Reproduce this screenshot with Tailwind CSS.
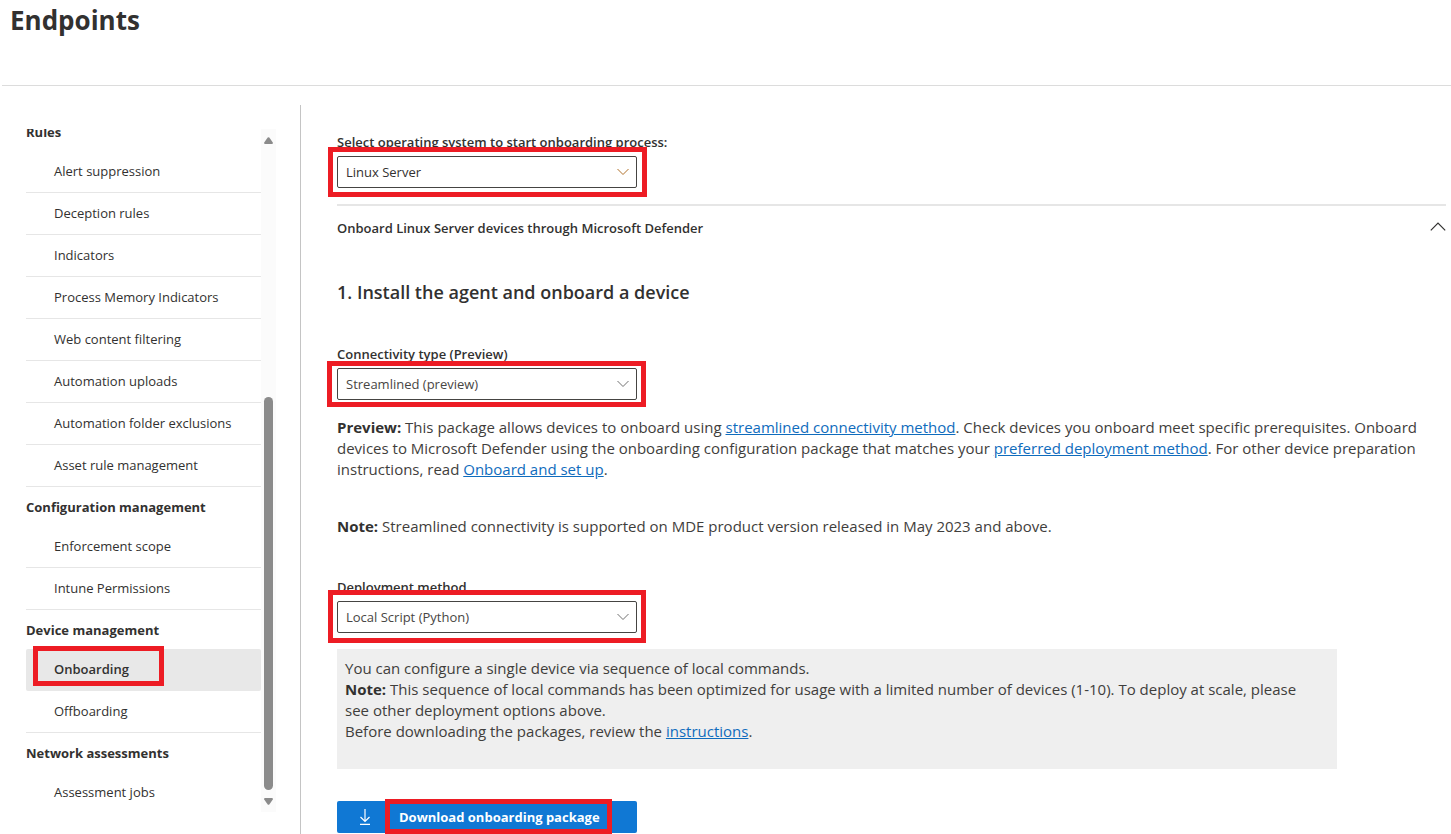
<!DOCTYPE html>
<html lang="en">
<head>
<meta charset="utf-8">
<meta name="viewport" content="width=device-width, initial-scale=1">
<title>Endpoints</title>
<script src="https://cdn.jsdelivr.net/npm/@tailwindcss/browser@4"></script>
</head>
<body class="flex h-screen flex-col overflow-hidden bg-white font-['Open_Sans','Noto_Sans',sans-serif] text-[13px] text-[#323130]">
  <header class="ml-0.5 h-[86px] shrink-0 border-b border-[#dcdcdc] pl-2">
    <h1 class="text-[26px] leading-10 font-bold">Endpoints</h1>
  </header>

  <div class="flex min-h-0 flex-1">
    <aside class="flex w-[300px] shrink-0 pt-[43px] pb-[22px] pl-[26px]">
      <nav aria-label="Endpoint settings" class="min-w-0 flex-1 overflow-hidden">
        <div class="-mt-[17px]">
          <h2 class="h-[39px] text-[13px] leading-10 font-bold">Rules</h2>
          <ul>
            <li><a href="#" class="block h-[42px] border-b border-[#e6e6e6] pl-7 leading-10">Alert suppression</a></li>
            <li><a href="#" class="block h-[42px] border-b border-[#e6e6e6] pl-7 leading-10">Deception rules</a></li>
            <li><a href="#" class="block h-[42px] border-b border-[#e6e6e6] pl-7 leading-10">Indicators</a></li>
            <li><a href="#" class="block h-[42px] border-b border-[#e6e6e6] pl-7 leading-10">Process Memory Indicators</a></li>
            <li><a href="#" class="block h-[42px] border-b border-[#e6e6e6] pl-7 leading-10">Web content filtering</a></li>
            <li><a href="#" class="block h-[42px] border-b border-[#e6e6e6] pl-7 leading-10">Automation uploads</a></li>
            <li><a href="#" class="block h-[42px] border-b border-[#e6e6e6] pl-7 leading-10">Automation folder exclusions</a></li>
            <li><a href="#" class="block h-[42px] border-b border-[#e6e6e6] pl-7 leading-10">Asset rule management</a></li>
          </ul>
          <h2 class="h-[39px] text-[13px] leading-10 font-bold">Configuration management</h2>
          <ul>
            <li><a href="#" class="block h-[42px] border-b border-[#e6e6e6] pl-7 leading-10">Enforcement scope</a></li>
            <li><a href="#" class="block h-[42px] border-b border-[#e6e6e6] pl-7 leading-10">Intune Permissions</a></li>
          </ul>
          <h2 class="h-[39px] text-[13px] leading-10 font-bold">Device management</h2>
          <ul>
            <li class="relative">
              <a href="#" aria-current="page" class="block h-[42px] rounded-xs bg-[#e8e8e8] pl-7 leading-10 font-semibold">Onboarding</a>
              <span class="pointer-events-none absolute -top-[3px] left-[7px] h-10 w-[131px] border-5 border-[#ed1c24]"></span>
            </li>
            <li><a href="#" class="block h-[42px] border-b border-[#e6e6e6] pl-7 leading-10">Offboarding</a></li>
          </ul>
          <h2 class="h-[39px] text-[13px] leading-10 font-bold">Network assessments</h2>
          <ul>
            <li><a href="#" class="block h-[42px] pl-7 leading-10">Assessment jobs</a></li>
          </ul>
        </div>
      </nav>
      <div class="mr-6 flex w-[15px] flex-col items-center bg-[#fbfbfb] pt-2 pb-[7px]" aria-hidden="true">
        <svg class="h-[7px] w-[9px]" viewBox="0 0 9 7" fill="#8b8b8b"><path d="M3.7.6Q4.5-.3 5.3.6L8.8 5.4Q9.200 6.900 8 7H1Q-.2 6.900.2 5.400Z"/></svg>
        <div class="mt-auto mb-2 h-[393px] w-[9px] rounded-full bg-[#8b8b8b]"></div>
        <svg class="h-[7px] w-[9px]" viewBox="0 0 9 7" fill="#8b8b8b"><path d="M3.700 6.400Q4.500 7.300 5.300 6.400L8.800 1.600Q9.200.1 8 0H1Q-.2.1.2 1.600Z"/></svg>
      </div>
    </aside>

    <main class="mt-[19px] min-w-0 flex-1 border-l border-[#c4c4c4] pt-[27px] pr-[5px] pl-9">
      <label for="os" class="block h-6 leading-5 font-semibold">Select operating system to start onboarding process:</label>
      <div class="relative w-[300px]">
        <select id="os" class="block h-8 w-full appearance-none rounded-xs border border-[#454442] bg-white px-2 pt-0.5"><option>Linux Server</option></select>
        <svg class="pointer-events-none absolute top-3 right-2 h-2 w-3" viewBox="0 0 12 8" fill="none" stroke="#b0702a"><path d="M.5 1 6 6.500 11.500 1"/></svg>
        <span class="pointer-events-none absolute -top-[9px] -left-[9px] h-[50px] w-[319px] border-5 border-[#ed1c24]"></span>
      </div>

      <div class="mt-4 flex h-[47px] items-center justify-between border-t-2 border-[#e6e6e6]">
        <h2 class="font-semibold">Onboard Linux Server devices through Microsoft Defender</h2>
        <button type="button" aria-label="Collapse section" class="block pb-1">
          <svg class="block h-[9px] w-4" viewBox="0 0 16 9" fill="none" stroke="#323130" stroke-width="1.200"><path d="M.8 8.300 8 1l7.200 7.300"/></svg>
        </button>
      </div>

      <h3 class="mt-[27px] text-lg leading-7 font-semibold">1. Install the agent and onboard a device</h3>

      <label for="connectivity" class="mt-[38px] block h-6 leading-5 font-semibold">Connectivity type (Preview)</label>
      <div class="relative w-[300px]">
        <select id="connectivity" class="block h-8 w-full appearance-none rounded-xs border border-[#454442] bg-white px-2 pt-0.5 text-[#484644]"><option>Streamlined (preview)</option></select>
        <svg class="pointer-events-none absolute top-3 right-2 h-2 w-3" viewBox="0 0 12 8" fill="none" stroke="#707070"><path d="M.5 1 6 6.500 11.500 1"/></svg>
        <span class="pointer-events-none absolute -top-[7px] -left-[10px] h-[46px] w-[319px] border-5 border-[#ed1c24]"></span>
      </div>

      <p class="mt-[17px] text-[15px] leading-[21px] text-[#3f3e3c]"><b class="text-[#323130]">Preview:</b> This package allows devices to onboard using <a href="#" class="text-[#0f6cbd] underline">streamlined connectivity method</a>. Check devices you onboard meet specific prerequisites. Onboard devices to Microsoft Defender using the onboarding configuration package that matches your <a href="#" class="text-[#0f6cbd] underline">preferred deployment method</a>. For other device preparation instructions, read <a href="#" class="text-[#0f6cbd] underline">Onboard and set up</a>.</p>
      <p class="mt-9 text-[15px] leading-[21px] text-[#3f3e3c]"><b class="text-[#323130]">Note:</b> Streamlined connectivity is supported on MDE product version released in May 2023 and above.</p>

      <label for="method" class="mt-10 block h-6 leading-5 font-semibold">Deployment method</label>
      <div class="relative w-[300px]">
        <select id="method" class="block h-8 w-full appearance-none rounded-xs border border-[#454442] bg-white px-2 pt-0.5 text-[#484644]"><option>Local Script (Python)</option></select>
        <svg class="pointer-events-none absolute top-3 right-2 h-2 w-3" viewBox="0 0 12 8" fill="none" stroke="#707070"><path d="M.5 1 6 6.500 11.500 1"/></svg>
        <span class="pointer-events-none absolute -top-[11px] -left-[9px] h-[53px] w-[318px] border-5 border-[#ed1c24]"></span>
      </div>

      <div class="mt-4 h-[120px] max-w-[1000px] bg-[#efefef] pt-[9px] pr-6 pl-2 text-[15px] leading-[21px] text-[#3f3e3c]">
        <p>You can configure a single device via sequence of local commands.</p>
        <p><b class="text-[#323130]">Note:</b> This sequence of local commands has been optimized for usage with a limited number of devices (1-10). To deploy at scale, please see other deployment options above.</p>
        <p>Before downloading the packages, review the <a href="#" class="text-[#0f6cbd] underline">instructions</a>.</p>
      </div>

      <button type="button" class="relative mt-8 flex h-8 w-[300px] items-center rounded-xs bg-[#1078d4] pl-5 font-bold text-white">
        <svg class="mr-[26px] h-4 w-4" viewBox="0 0 16 16" fill="none" stroke="currentColor" stroke-width="1.200"><path d="M8 0v12M3.500 8 8 12.500 12.500 8M3 15.400h10"/></svg>
        <span class="pt-0.5">Download onboarding package</span>
        <span class="pointer-events-none absolute -top-0.5 left-12 h-[35px] w-[227px] border-5 border-[#ed1c24]"></span>
      </button>
    </main>
  </div>
</body>
</html>
